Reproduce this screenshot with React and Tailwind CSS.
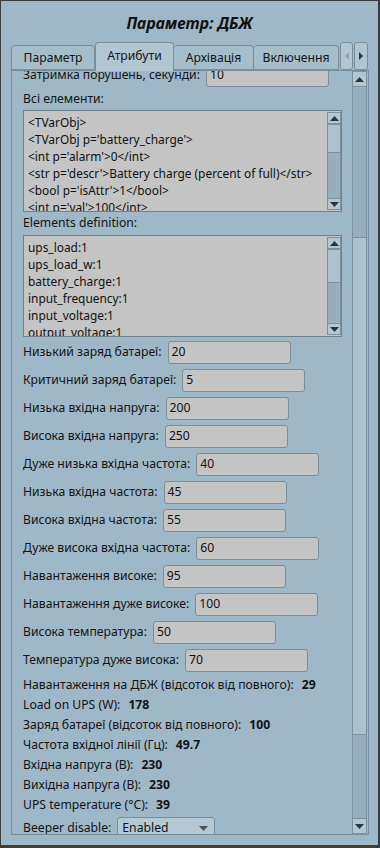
import React from 'react';

const fields = [
  ['Низький заряд батареї:', '20'],
  ['Критичний заряд батареї:', '5'],
  ['Низька вхідна напруга:', '200'],
  ['Висока вхідна напруга:', '250'],
  ['Дуже низька вхідна частота:', '40'],
  ['Низька вхідна частота:', '45'],
  ['Висока вхідна частота:', '55'],
  ['Дуже висока вхідна частота:', '60'],
  ['Навантаження високе:', '95'],
  ['Навантаження дуже високе:', '100'],
  ['Висока температура:', '50'],
  ['Температура дуже висока:', '70'],
];

const info = [
  ['Навантаження на ДБЖ (відсоток від повного):', '29'],
  ['Load on UPS (W):', '178'],
  ['Заряд батареї (відсоток від повного):', '100'],
  ['Частота вхідної лінії (Гц):', '49.7'],
  ['Вхідна напруга (В):', '230'],
  ['Вихідна напруга (В):', '230'],
  ['UPS temperature (°C):', '39'],
];

const allItems = [
  "<TVarObj>",
  "<TVarObj p='battery_charge'>",
  "<int p='alarm'>0</int>",
  "<str p='descr'>Battery charge (percent of full)</str>",
  "<bool p='isAttr'>1</bool>",
  "<int p='val'>100</int>",
];

const defs = [
  'ups_load:1',
  'ups_load_w:1',
  'battery_charge:1',
  'input_frequency:1',
  'input_voltage:1',
  'output_voltage:1',
];

const Arrow = ({ dir, color = '#2e3336' }) => (
  <svg width="9" height="5" viewBox="0 0 9 5">
    {dir === 'up' ? <path d="M0 5 L4.5 0 L9 5 Z" fill={color} /> : <path d="M0 0 L4.5 5 L9 0 Z" fill={color} />}
  </svg>
);

const ScrollBar = ({ upH, before, thumb, downH }) => (
  <div className="flex flex-col h-full border border-[#7d919d] bg-[#97afbd]">
    <div className="flex items-center justify-center bg-[#b3c7d2] border-b border-[#7d919d]" style={{ height: upH }}>
      <Arrow dir="up" />
    </div>
    <div style={{ height: before }} />
    <div className="bg-[#adc2ce] border-y border-[#7d919d]" style={{ height: thumb }} />
    <div className="flex-1" />
    <div className="flex items-center justify-center bg-[#b3c7d2] border-t border-[#7d919d]" style={{ height: downH }}>
      <Arrow dir="down" />
    </div>
  </div>
);

const TextBox = ({ lines, before, thumb }) => (
  <div className="flex h-[102px] w-[319px] border border-[#6f828e] bg-[#c4c4c4] overflow-hidden">
    <div className="flex-1 overflow-hidden pl-[4px] pt-[3px] leading-[17px] text-[11.9px] text-[#111] whitespace-nowrap">
      {lines.map((l) => (
        <div key={l}>{l}</div>
      ))}
    </div>
    <div className="w-[14px] py-[1px]">
      <ScrollBar upH={11} before={before} thumb={thumb} downH={11} />
    </div>
  </div>
);

const Input = ({ value }) => (
  <div className="h-[23px] w-[123px] border border-[#7b8e99] rounded-[3px] bg-[#c4c4c4] pl-[3px] flex items-center text-[#111]">
    {value}
  </div>
);

export default function App() {
  return (
    <div
      className="w-[380px] h-[848px] overflow-hidden bg-[#9fb8c7] border-t border-l border-r-2 border-b-[3px] border-t-[#3b3b3b] border-l-[#3b3b3b] border-r-[#3b3b3b] border-b-[#4a3a2e] text-[12.2px] text-[#141414] flex flex-col"
      style={{ fontFamily: '"Noto Sans", "DejaVu Sans", sans-serif' }}
    >
      {/* title */}
      <div className="h-[41px] pt-[5px] flex items-center justify-center text-[15.8px] font-bold italic text-[#111] shrink-0">
        Параметр: ДБЖ
      </div>

      {/* tabs */}
      <div className="h-[28px] flex items-end pl-[10px] shrink-0">
        <div className="h-[25px] w-[84px] border border-[#7a8f9c] rounded-t-[4px] bg-[#a6bdca] flex items-center justify-center pt-[1px]">Параметр</div>
        <div className="relative z-10 h-[29px] w-[79px] -mb-px border border-b-0 border-[#7a8f9c] rounded-t-[4px] bg-[#b2c6d1] flex items-center justify-center pb-[2px]">Атрибути</div>
        <div className="h-[25px] w-[80px] border border-l-0 border-[#7a8f9c] rounded-t-[4px] bg-[#a6bdca] flex items-center justify-center pt-[1px]">Архівація</div>
        <div className="h-[25px] w-[85px] border border-l-0 border-[#7a8f9c] rounded-t-[4px] bg-[#a6bdca] flex items-center justify-center pt-[1px]">Включення</div>
        <div className="h-[28px] flex gap-[1px] ml-[1px]">
          <div className="w-[13px] h-[28px] border border-[#7a8f9c] rounded-[3px] bg-[#b2c6d1] flex items-center justify-center">
            <svg width="4" height="8" viewBox="0 0 4 8"><path d="M4 0 L0 4 L4 8 Z" fill="#8fa2ad" /></svg>
          </div>
          <div className="w-[14px] h-[28px] border border-[#7a8f9c] rounded-[3px] bg-[#b2c6d1] flex items-center justify-center">
            <svg width="4" height="8" viewBox="0 0 4 8"><path d="M0 0 L4 4 L0 8 Z" fill="#2e3336" /></svg>
          </div>
        </div>
      </div>

      {/* panel */}
      <div className="ml-[10px] w-[358px] h-[765px] border border-[#7a8f9c] bg-[#9fb8c7] flex shrink-0">
        <div className="w-[340px] h-full overflow-hidden">
          <div className="-mt-[7px] pl-[11px] flex flex-col">
            <div className="h-[23px] flex items-center">
              <span>Затримка порушень, секунди:</span>
              <div className="ml-[6px]"><Input value="10" /></div>
            </div>
            <div className="h-[22px] mt-[1px] flex items-center">Всі елементи:</div>
            <TextBox lines={allItems} before={0} thumb={29} />
            <div className="h-[23px] flex items-center">Elements definition:</div>
            <TextBox lines={defs} before={0} thumb={34} />

            <div className="mt-[4px] flex flex-col gap-[5px]">
              {fields.map(([label, value]) => (
                <div key={label} className="h-[23px] flex items-center">
                  <span className="whitespace-nowrap">{label}</span>
                  <div className="ml-[6px]"><Input value={value} /></div>
                </div>
              ))}
            </div>

            <div className="mt-[3px] flex flex-col">
              {info.map(([label, value]) => (
                <div key={label} className="h-[20px] flex items-center whitespace-nowrap">
                  <span>{label}</span>
                  <span className="ml-[8px] font-bold">{value}</span>
                </div>
              ))}
            </div>

            <div className="mt-[2px] h-[23px] flex items-center">
              <span>Beeper disable:</span>
              <div className="ml-[6px] h-[23px] w-[98px] border border-[#7b8e99] rounded-[3px] bg-[#b5c8d3] flex items-center justify-between pl-[4px] pr-[6px]">
                <span>Enabled</span>
                <Arrow dir="down" color="#4a5257" />
              </div>
            </div>
          </div>
        </div>
        <div className="w-[15px] h-full">
          <ScrollBar upH={15} before={150} thumb={498} downH={15} />
        </div>
      </div>
    </div>
  );
}
